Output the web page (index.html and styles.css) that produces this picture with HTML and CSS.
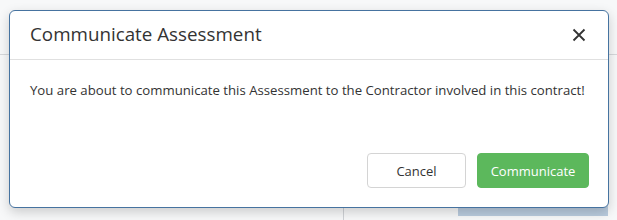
FILE: index.html
```html
<!DOCTYPE html>
<html>
<head>
<meta charset="utf-8">
<link rel="stylesheet" href="styles.css">
</head>
<body>
<div class="backdrop">
  <div class="bg-rule"></div>
  <div class="bg-col"></div>
  <div class="bg-tab"></div>
</div>
<div class="modal">
  <div class="modal-header">
    <h4 class="modal-title">Communicate Assessment</h4>
    <button class="close" aria-label="Close">
      <svg width="14" height="14" viewBox="0 0 14 14"><path d="M1.5 1.5 L12.5 12.5 M12.5 1.5 L1.5 12.5" stroke="#333" stroke-width="1.8" fill="none"/></svg>
    </button>
  </div>
  <div class="modal-body">
    <p>You are about to communicate this Assessment to the Contractor involved in this contract!</p>
  </div>
  <div class="modal-footer">
    <button class="btn btn-default">Cancel</button>
    <button class="btn btn-success">Communicate</button>
  </div>
</div>
</body>
</html>
```
FILE: styles.css
```css
html, body {
  margin: 0;
  padding: 0;
  width: 617px;
  height: 220px;
  overflow: hidden;
  background: #f7f8f9;
  font-family: "Open Sans", "Noto Sans", sans-serif;
  color: #333;
}
.backdrop {
  position: absolute;
  inset: 0;
}
.bg-rule {
  position: absolute;
  left: 0;
  right: 0;
  top: 54px;
  height: 1px;
  background: #d6d8db;
}
.bg-col {
  position: absolute;
  left: 343px;
  top: 200px;
  bottom: 0;
  width: 1px;
  background: #cfd2d6;
}
.bg-tab {
  position: absolute;
  left: 458px;
  top: 200px;
  width: 150px;
  height: 16px;
  background: #b9cbde;
}
.modal {
  position: absolute;
  left: 9px;
  top: 10px;
  width: 598px;
  height: 196px;
  background: #fff;
  border: 1px solid #4673a0;
  border-radius: 6px;
  box-shadow: 0 4px 12px rgba(0, 0, 0, 0.18);
  display: flex;
  flex-direction: column;
}
.modal-header {
  height: 48px;
  border-bottom: 1px solid #e0e0e0;
  display: flex;
  align-items: center;
  justify-content: space-between;
  padding: 0 22px 0 20px;
}
.modal-title {
  margin: 0 0 2px 0;
  font-size: 18.8px;
  font-weight: 400;
  color: #333;
}
.close {
  border: 0;
  background: none;
  padding: 0;
  width: 14px;
  height: 14px;
  display: flex;
}
.modal-body {
  padding: 21px 20px 0 20px;
  flex: 1;
}
.modal-body p {
  margin: 0;
  font-size: 13.2px;
  line-height: 18px;
}
.modal-footer {
  display: flex;
  justify-content: flex-end;
  gap: 11px;
  padding: 0 19px 19px 0;
}
.btn {
  height: 35px;
  font-family: inherit;
  font-size: 13px;
  border-radius: 4px;
  padding: 0;
}
.btn-default {
  width: 99px;
  background: #fff;
  border: 1px solid #d4d4d4;
  color: #333;
}
.btn-success {
  width: 112px;
  background: #5cb85c;
  border: 1px solid #5cb85c;
  color: #fff;
}
```
